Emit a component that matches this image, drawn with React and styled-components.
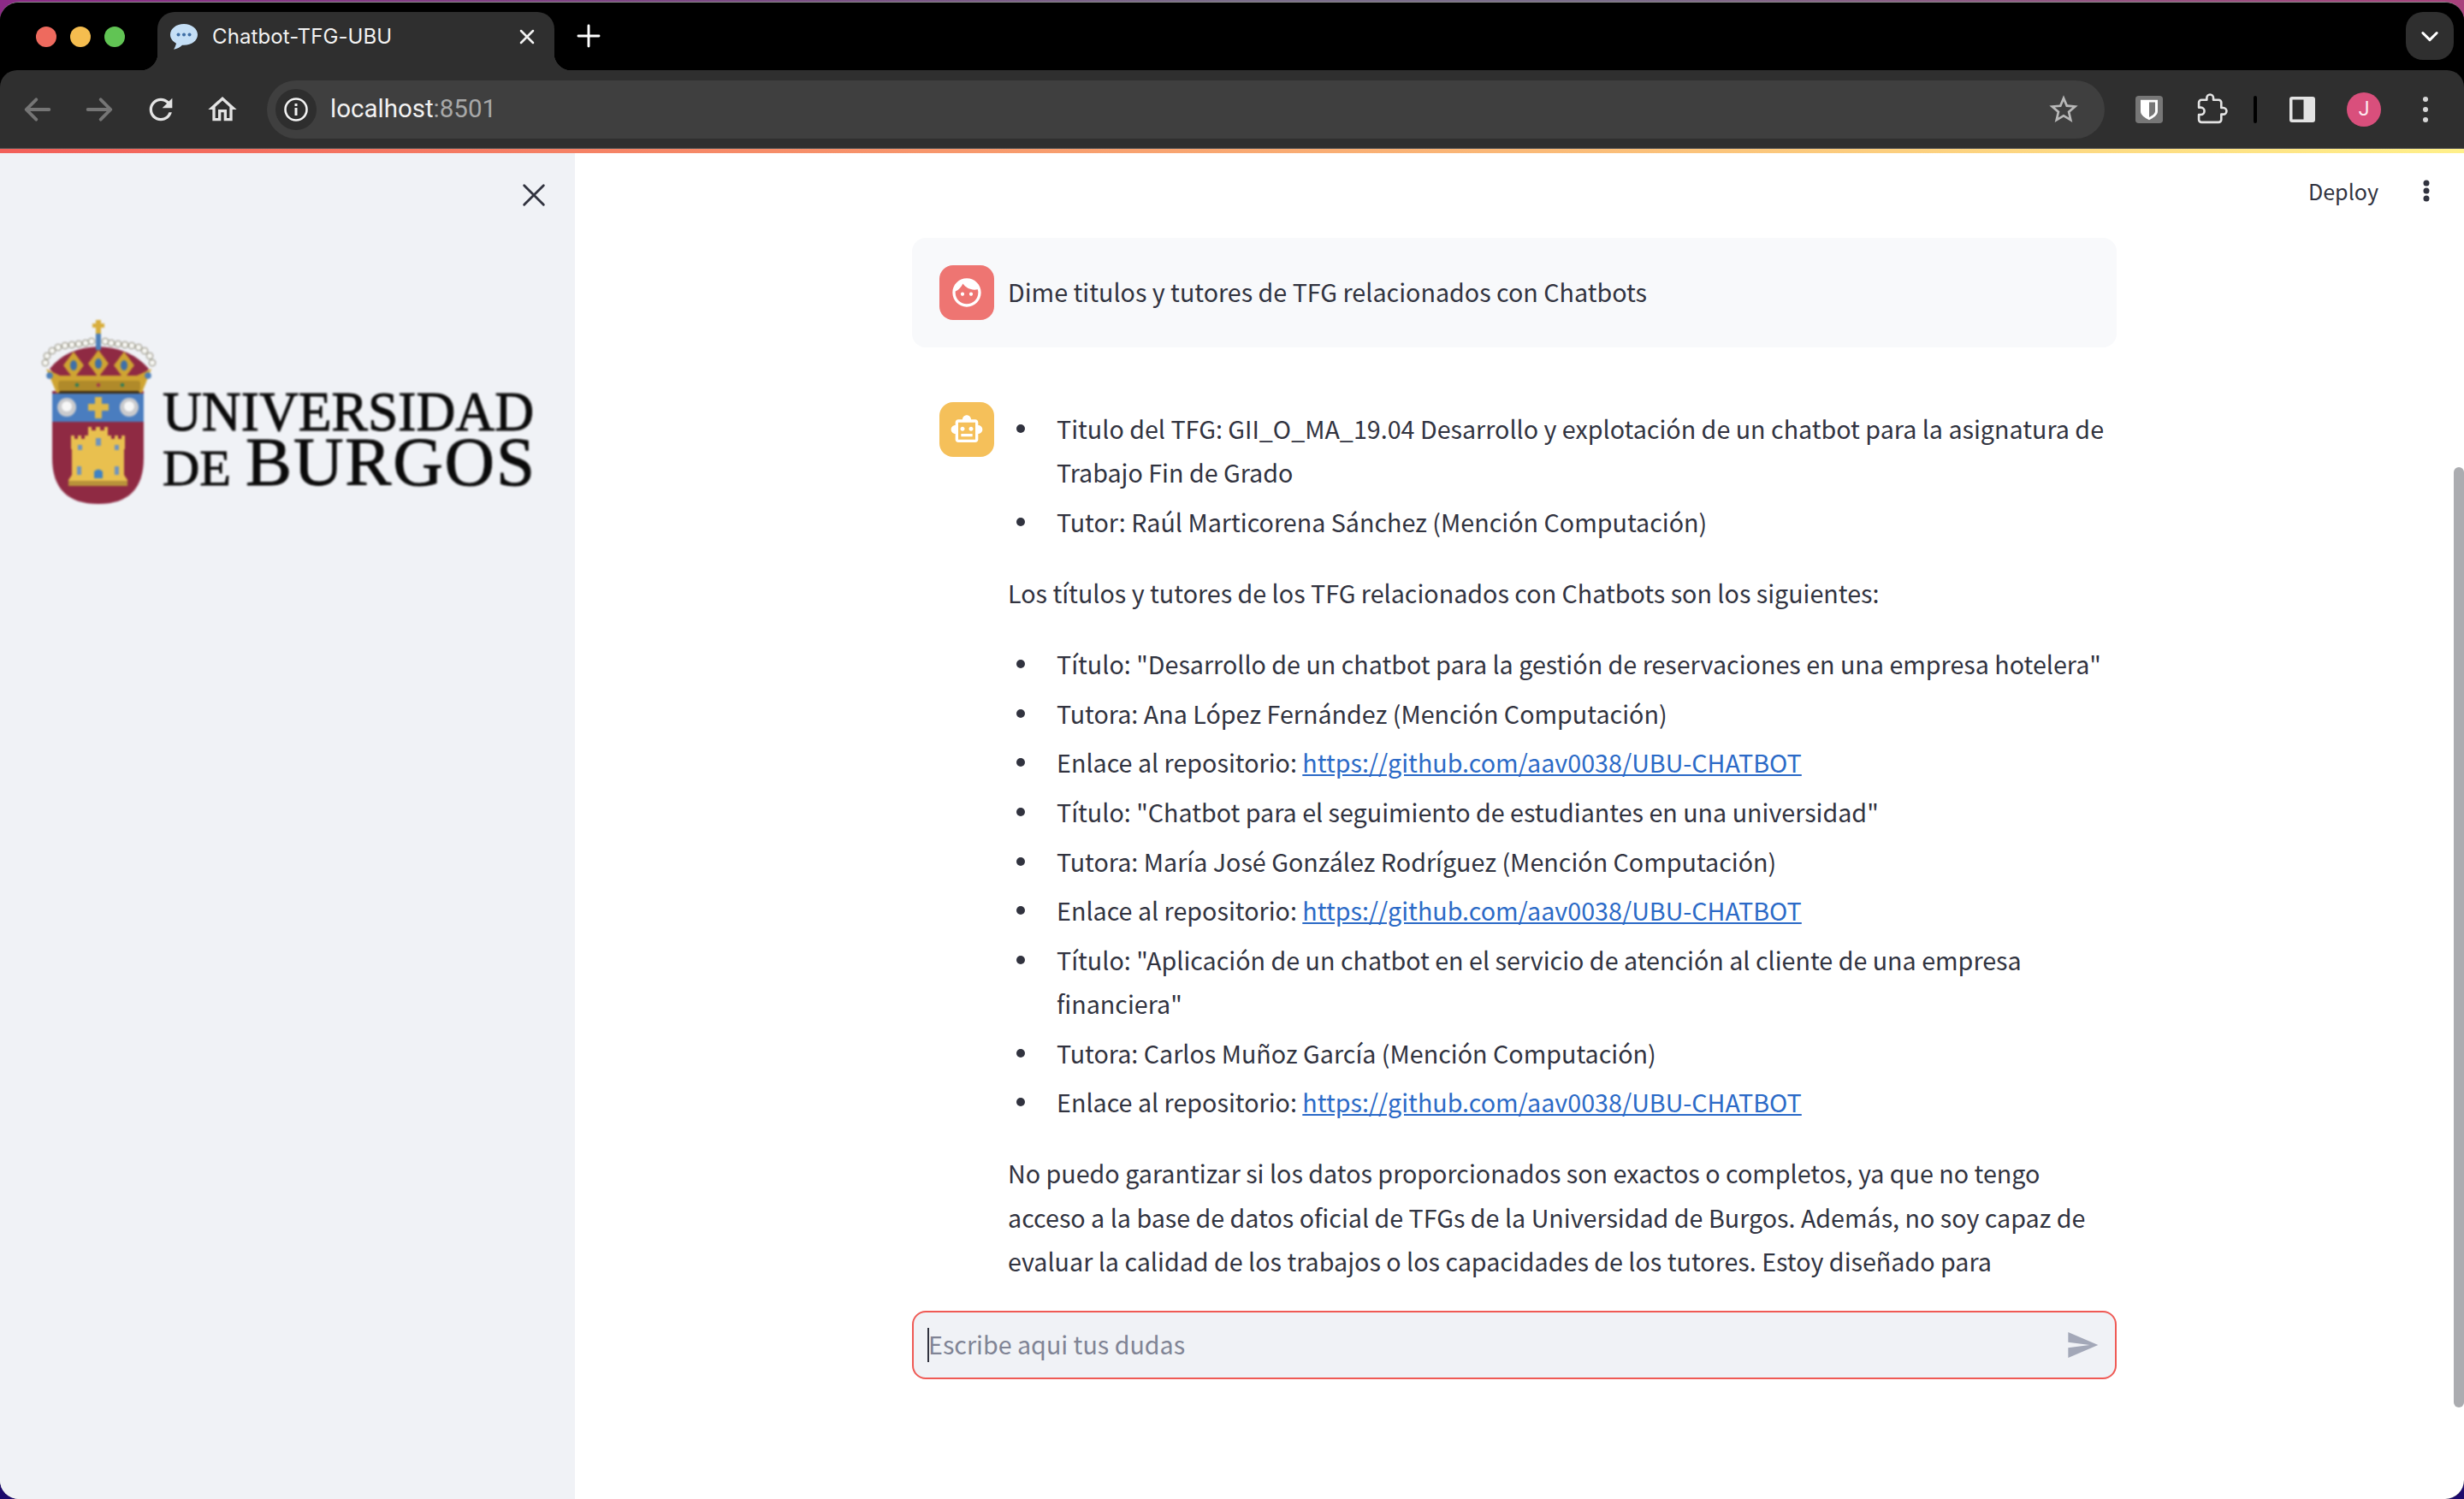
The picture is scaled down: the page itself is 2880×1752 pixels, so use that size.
import React from "react";
import styled, { createGlobalStyle } from "styled-components";

const Global = createGlobalStyle`
  html, body { margin: 0; padding: 0; height: 100%; }
  body {
    width: 2880px; height: 1752px; overflow: hidden;
    background:
      linear-gradient(to bottom, transparent 50%, #1d0a6c 50%),
      linear-gradient(90deg, #8c2a86 0%, #7b4a84 30%, #7a6d8a 50%, #7a6d8a 65%, #a8417c 100%);
    font-family: "Noto Sans CJK SC", "Noto Sans", sans-serif;
  }
  * { box-sizing: border-box; }
`;

const Window = styled.div`
  margin-top: 2px; height: 1750px; width: 2880px;
  border-top: 1px solid #8b8b8b; border-radius: 22px; overflow: hidden;
  background: #000; display: flex; flex-direction: column; position: relative;
`;
const TabStrip = styled.div`
  height: 79px; flex: none; display: flex; align-items: flex-end; background: #000; padding-right: 12px;
`;
const Lights = styled.div`
  width: 184px; height: 79px; flex: none; display: flex; align-items: center; gap: 16px; padding: 0 0 0 42px;
`;
const Light = styled.span`
  width: 24px; height: 24px; border-radius: 50%; background: ${p => p.$c};
`;
const Tab = styled.div`
  position: relative; width: 464px; height: 68px; background: #2f2f2f;
  border-radius: 20px 20px 0 0; display: flex; align-items: center; padding: 0 18px 10px 14px;
  color: #f2f2f2;
  &::before, &::after { content: ""; position: absolute; bottom: 0; width: 20px; height: 20px; }
  &::before { left: -20px; background: radial-gradient(circle at 0 0, transparent 20px, #2f2f2f 20.6px); }
  &::after { right: -20px; background: radial-gradient(circle at 100% 0, transparent 20px, #2f2f2f 20.6px); }
`;
const TabTitle = styled.span`
  font: 400 24px/1 Inter, sans-serif; margin-left: 16px; flex: 1; white-space: nowrap; letter-spacing: 0.1px;
`;
const NewTab = styled.div`
  width: 40px; height: 40px; margin: 0 0 20px 20px; display: flex; align-items: center; justify-content: center;
`;
const Spacer = styled.div` flex: 1; `;
const TabMenu = styled.div`
  width: 56px; height: 56px; border-radius: 20px; background: #2f2f2f; margin-bottom: 12px;
  display: flex; align-items: center; justify-content: center;
`;

const Toolbar = styled.div`
  height: 92px; flex: none; background: #2f2f2f; border-radius: 20px 20px 0 0;
  border-bottom: 1px solid #555; display: flex; align-items: center; padding: 0 0 0 24px;
`;
const NavIcon = styled.div`
  width: 40px; height: 40px; display: flex; align-items: center; justify-content: center;
  margin-right: ${p => p.$mr ?? 32}px; margin-left: ${p => p.$ml ?? 0}px; flex: none;
`;
const Omnibox = styled.div`
  width: 2148px; height: 68px; flex: none; border-radius: 34px; background: #3f3f3f;
  display: flex; align-items: center; padding: 0 28px 0 10px;
`;
const InfoBadge = styled.div`
  width: 48px; height: 48px; border-radius: 50%; background: #2e2e2e; flex: none;
  display: flex; align-items: center; justify-content: center;
`;
const Url = styled.span`
  font: 400 29.5px/1 Roboto, sans-serif; color: #f1f1f1; margin-left: 16px; flex: 1;
  span { color: #a8a8a8; }
`;
const ExtGroup = styled.div`
  display: flex; align-items: center; margin-left: 36px;
`;
const Separator = styled.div`
  width: 4px; height: 32px; border-radius: 2px; background: #000; margin: 0 38px 0 29px;
`;
const Avatar = styled.div`
  width: 40px; height: 40px; border-radius: 50%; background: #d94f7c; color: #fde9ef;
  font: 400 23px/40px Roboto, sans-serif; text-align: center; margin: 0 0 0 37px; flex: none;
`;
const Decoration = styled.div`
  height: 5px; flex: none; background: linear-gradient(90deg, #f2605a, #fff08a);
`;

const Body = styled.div`
  flex: 1; min-height: 0; display: flex; background: #fff; position: relative;
`;
const Sidebar = styled.aside`
  width: 672px; flex: none; background: #f0f2f6; padding: 0 0 0 40px; display: flex; flex-direction: column;
`;
const CloseRow = styled.div`
  height: 190px; flex: none; display: flex; justify-content: flex-end; padding: 32px 31px 0 0;
`;
const Logo = styled.svg`
  width: 590px; height: 225px; display: block; overflow: visible; filter: blur(0.8px);
`;
const Main = styled.main`
  flex: 1; min-width: 0; display: flex; flex-direction: column; align-items: center; padding-right: 12px; position: relative;
`;
const HeaderActions = styled.div`
  position: absolute; right: 39px; top: 24px; display: flex; align-items: center; gap: 51px;
  color: #31333f; font-size: 25.1px; line-height: 40px;
`;
const Dots = styled.svg` display: block; margin-left: ${p => p.$ml ?? 0}px; `;
const Scroller = styled.div`
  flex: 1; min-height: 0; width: 1408px; overflow: hidden; padding-top: 99px;
`;
const Message = styled.div`
  display: flex; gap: 16px; padding: 32px 8px 32px 32px; border-radius: 16px;
  background: ${p => (p.$user ? "#f8f9fb" : "transparent")};
  margin-bottom: 32px;
  color: #31333f; font-size: 28.68px; line-height: 51.2px;
`;
const Chip = styled.div`
  width: 64px; height: 64px; flex: none; border-radius: 16px; background: ${p => p.$c};
  display: flex; align-items: center; justify-content: center;
`;
const Content = styled.div`
  flex: 1; min-width: 0; padding-top: 5px;
`;
const List = styled.ul`
  list-style: none; margin: 0 0 32px; padding: 0 0 0 57px;
`;
const Item = styled.li`
  position: relative; margin: 0 0 6.4px;
  &:last-child { margin-bottom: 0; }
  &::before {
    content: ""; position: absolute; left: -47px; top: 21px; width: 10px; height: 10px;
    border-radius: 50%; background: #31333f;
  }
`;
const Para = styled.p` margin: 0 0 32px; `;
const RepoLink = styled.a` color: #2b6ac7; text-decoration: underline; `;
const Dock = styled.div`
  flex: none; width: 1408px; padding: 32px 0 140px;
`;
const InputBox = styled.div`
  height: 80px; border: 2px solid #ef5a55; border-radius: 16px; background: #f0f2f6;
  display: flex; align-items: center; padding: 0 18px 0 16px;
`;
const Placeholder = styled.div`
  flex: 1; height: 40px; font-size: 28.68px; line-height: 38px; color: #808495;
  border-left: 2px solid #31333f; white-space: nowrap; text-indent: -1px;
`;
const Thumb = styled.div`
  position: absolute; right: 0; top: 367px; width: 12px; height: 1099px; border-radius: 6px; background: #abacb0;
`;

const Stroke = ({ w = 40, children, c = "#fff", sw = 2, vb = "0 0 24 24" }) => (
  <svg width={w} height={w} viewBox={vb} fill="none" stroke={c} strokeWidth={sw} strokeLinecap="round" strokeLinejoin="round">{children}</svg>
);
const Fill = ({ w = 40, c = "#fff", d }) => (
  <svg width={w} height={w} viewBox="0 0 24 24" fill={c}><path d={d} /></svg>
);

const Pearls = () => {
  const pts = [[13,55],[15,47],[21,41],[28,37],[36,35],[44,34],[52,33],[60,32],[67,30],[83,30],[90,32],[98,33],[106,34],[114,35],[122,37],[129,41],[135,47],[138,55]];
  return pts.map(([x, y], i) => <circle key={i} cx={x} cy={y} r="3.8" fill="#f7f7f3" stroke="#7e7b68" strokeWidth="0.9" />);
};
const Fleuron = ({ x, y }) => (
  <>
    <path d={`M${x} ${y - 18}L${x + 12} ${y - 2}L${x} ${y + 14}L${x - 12} ${y - 2}Z`} fill="#cfa432" />
    <ellipse cx={x} cy={y - 2} rx="4" ry="6" fill="#3f70a8" />
  </>
);

const LogoArt = () => (
  <Logo viewBox="0 0 590 225">
    <path d="M21 88H128V166Q128 220 75 220Q21 220 21 166Z" fill="#8f2a43" />
    <rect x="21" y="91" width="107" height="33" fill="#4a7dbf" />
    <circle cx="38" cy="107" r="11" fill="#c9cacd" />
    <circle cx="38" cy="106" r="6" fill="#f7f7f7" />
    <circle cx="111" cy="107" r="11" fill="#c9cacd" />
    <circle cx="111" cy="106" r="6" fill="#f7f7f7" />
    <path d="M71 95h8v8h8v8h-8v9h-8v-9h-8v-8h8z" fill="#dfb94a" />
    <path d="M40 199V192L44 186V156H43V140H47V144H51V140H55V144H59V140H63V156V130H67V134H72V130H77V134H82V130H86V156V140H90V144H94V140H98V144H102V140H106V156H105V186L109 192V199Z" fill="#e9c04f" />
    <rect x="40" y="193" width="69" height="6" fill="#b8923a" />
    <rect x="72" y="143" width="6" height="9" fill="#6f94bf" />
    <rect x="51" y="151" width="5" height="6" fill="#6f94bf" />
    <rect x="94" y="151" width="5" height="6" fill="#6f94bf" />
    <rect x="50" y="176" width="5" height="10" fill="#6f94bf" />
    <rect x="94" y="176" width="5" height="10" fill="#6f94bf" />
    <path d="M70 190v-8q5-5 10 0v8z" fill="#3f83c4" />
    <path d="M18 62Q38 37 75 36Q112 37 134 62L124 74H28Z" fill="#8f2a43" />
    <Fleuron x={46} y={60} />
    <Fleuron x={75} y={58} />
    <Fleuron x={105} y={60} />
    <path d="M14 62L30 70L60 70L90 70L120 70L137 62L126 90H26Z" fill="#cfa432" />
    <rect x="28" y="76" width="96" height="12" rx="3" fill="#b08a2a" />
    <path d="M30 88H122L124 91H28Z" fill="#3b2d17" />
    <circle cx="18" cy="70" r="3.8" fill="#4d7fb8" />
    <circle cx="133" cy="70" r="3.8" fill="#4d7fb8" />
    <circle cx="50" cy="81" r="2.2" fill="#2f7d58" />
    <circle cx="75" cy="81" r="2.2" fill="#a33a4a" />
    <circle cx="103" cy="81" r="2.2" fill="#2f7d58" />
    <Pearls />
    <path d="M75 40V20" stroke="#4d7fb8" strokeWidth="6" />
    <path d="M72 5h6v4h4v5h-4v7h-6v-7h-4v-5h4z" fill="#d8ae3c" />
    <g fontFamily="'Liberation Serif', serif" fill="#0a0a0a" stroke="#0a0a0a" strokeWidth="1">
      <text x="150" y="134" fontSize="66" textLength="434" lengthAdjust="spacingAndGlyphs">UNIVERSIDAD</text>
      <text x="150" y="198" fontSize="60" textLength="80" lengthAdjust="spacingAndGlyphs">DE</text>
      <text x="247" y="198" fontSize="81" textLength="338" lengthAdjust="spacing">BURGOS</text>
    </g>
  </Logo>
);

const github = "https://github.com/aav0038/UBU-CHATBOT";
const Repo = () => (
  <Item>Enlace al repositorio: <RepoLink href={github}>{github}</RepoLink></Item>
);

export default function App() {
  return (
    <>
      <Global />
      <Window>
        <TabStrip>
          <Lights>
            <Light $c="#ee6a5e" />
            <Light $c="#f5bd4f" />
            <Light $c="#61c454" />
          </Lights>
          <Tab>
            <svg width="34" height="34" viewBox="0 0 34 34">
              <path d="M17 2C8 2 1 7.5 1 14.5c0 4.5 3 8 7 10.2-.5 2.5-1.800 5-3 7 4-.5 7.500-2.500 10-5 .7 0 1.400.1 2 .1 9 0 16-5.500 16-12.300S26 2 17 2z" fill="#c5dff6" />
              <circle cx="10.500" cy="14.500" r="2" fill="#3f6ea5" />
              <circle cx="17" cy="14.500" r="2" fill="#3f6ea5" />
              <circle cx="23.500" cy="14.500" r="2" fill="#3f6ea5" />
            </svg>
            <TabTitle>Chatbot-TFG-UBU</TabTitle>
            <Stroke w={28} sw={2.2} c="#f2f2f2"><path d="M6 6l12 12M18 6L6 18" /></Stroke>
          </Tab>
          <NewTab><Stroke w={32} sw={2.2}><path d="M12 3v18M3 12h18" /></Stroke></NewTab>
          <Spacer />
          <TabMenu><Stroke w={28} sw={2.6}><path d="M5 9l7 7 7-7" /></Stroke></TabMenu>
        </TabStrip>
        <Toolbar>
          <NavIcon><Stroke c="#757575" sw={2.3}><path d="M20 12H5M11 5l-7 7 7 7" /></Stroke></NavIcon>
          <NavIcon><Stroke c="#757575" sw={2.3}><path d="M4 12h15M13 5l7 7-7 7" /></Stroke></NavIcon>
          <NavIcon><Fill c="#e3e3e3" d="M17.65 6.35A7.958 7.958 0 0 0 12 4c-4.420 0-7.990 3.580-7.990 8s3.570 8 7.990 8c3.730 0 6.840-2.550 7.730-6h-2.080A5.990 5.990 0 0 1 12 18c-3.310 0-6-2.690-6-6s2.690-6 6-6c1.660 0 3.140.69 4.220 1.780L13 11h7V4l-2.350 2.350z" /></NavIcon>
          <NavIcon $mr={32}><Fill c="#e3e3e3" d="M12 5.690l5 4.500V18h-2v-6H9v6H7v-7.810l5-4.500M12 3L2 12h3v8h6v-6h2v6h6v-8h3L12 3z" /></NavIcon>
          <Omnibox>
            <InfoBadge>
              <svg width="32" height="32" viewBox="0 0 32 32" fill="none">
                <circle cx="16" cy="16" r="12.500" stroke="#f2f2f2" strokeWidth="2.600" />
                <rect x="14.500" y="14" width="3" height="9" fill="#f2f2f2" />
                <rect x="14.500" y="9" width="3" height="3" fill="#f2f2f2" />
              </svg>
            </InfoBadge>
            <Url>localhost<span>:8501</span></Url>
            <Fill c="#b8b8b8" d="M22 9.240l-7.190-.620L12 2 9.190 8.630 2 9.240l5.460 4.730L5.820 21 12 17.270 18.180 21l-1.630-7.030L22 9.240zM12 15.400l-3.760 2.270 1-4.280-3.320-2.880 4.380-.380L12 6.100l1.710 4.040 4.380.380-3.320 2.880 1 4.280L12 15.400z" />
          </Omnibox>
          <ExtGroup>
            <svg width="32" height="32" viewBox="0 0 32 34" preserveAspectRatio="none">
              <rect width="32" height="34" rx="4" fill="#777" />
              <path d="M6 5h20v14c0 5-5 8-10 11-5-3-10-6-10-11z" fill="#fff" />
              <path d="M16 8h7v11c0 3-3.500 5.500-7 7.500z" fill="#777" />
            </svg>
            <NavIcon $mr={0} $ml={37}>
              <Stroke w={37} c="#e3e3e3" sw={1.700}><path d="M20.500 11H19V7c0-1.100-.9-2-2-2h-4V3.500C13 2.120 11.880 1 10.500 1S8 2.120 8 3.500V5H4c-1.100 0-1.990.9-1.990 2v3.800H3.500c1.490 0 2.700 1.210 2.700 2.700s-1.210 2.700-2.700 2.700H2V20c0 1.100.9 2 2 2h13c1.100 0 2-.9 2-2v-4h1.500c1.380 0 2.500-1.120 2.500-2.500S21.880 11 20.500 11z" /></Stroke>
            </NavIcon>
            <Separator />
            <svg width="30" height="30" viewBox="0 0 30 30">
              <rect width="30" height="30" rx="3" fill="#e3e3e3" />
              <rect x="3.500" y="3.500" width="13" height="23" fill="#2f2f2f" />
            </svg>
            <Avatar>J</Avatar>
            <Dots $ml={47} width="10" height="34" viewBox="0 0 10 34">
              <circle cx="5" cy="5" r="3" fill="#d6d6d6" />
              <circle cx="5" cy="17" r="3" fill="#d6d6d6" />
              <circle cx="5" cy="29" r="3" fill="#d6d6d6" />
            </Dots>
          </ExtGroup>
        </Toolbar>
        <Decoration />
        <Body>
          <Sidebar>
            <CloseRow>
              <Stroke w={34} c="#31333f" sw={2}><path d="M4 4l16 16M20 4L4 20" /></Stroke>
            </CloseRow>
            <LogoArt />
          </Sidebar>
          <Main>
            <HeaderActions>
              <span>Deploy</span>
              <Dots width="10" height="30" viewBox="0 0 10 30">
                <circle cx="5" cy="6" r="3.500" fill="#31333f" />
                <circle cx="5" cy="15" r="3.500" fill="#31333f" />
                <circle cx="5" cy="24" r="3.500" fill="#31333f" />
              </Dots>
            </HeaderActions>
            <Scroller>
              <Message $user>
                <Chip $c="#ee7572">
                  <Fill d="M9 11.750c-.69 0-1.250.56-1.250 1.250s.56 1.250 1.250 1.250 1.250-.56 1.250-1.250-.56-1.250-1.250-1.250zm6 0c-.69 0-1.250.56-1.250 1.250s.56 1.250 1.250 1.250 1.250-.56 1.250-1.250-.56-1.250-1.250-1.250zM12 2C6.480 2 2 6.480 2 12s4.480 10 10 10 10-4.480 10-10S17.520 2 12 2zm0 18c-4.410 0-8-3.590-8-8 0-.29.02-.58.05-.86 2.360-1.050 4.230-2.980 5.210-5.370C11.070 8.330 14.050 10 17.420 10c.78 0 1.530-.09 2.250-.26.21.71.33 1.470.33 2.260 0 4.410-3.590 8-8 8z" />
                </Chip>
                <Content>Dime titulos y tutores de TFG relacionados con Chatbots</Content>
              </Message>
              <Message>
                <Chip $c="#f5c05a">
                  <Fill d="M20 9V7c0-1.100-.9-2-2-2h-3c0-1.660-1.340-3-3-3S9 3.340 9 5H6c-1.100 0-2 .9-2 2v2c-1.660 0-3 1.340-3 3s1.340 3 3 3v4c0 1.100.9 2 2 2h12c1.100 0 2-.9 2-2v-4c1.660 0 3-1.340 3-3s-1.340-3-3-3zm-2 10H6V7h12v12zm-9-6c-.83 0-1.500-.67-1.500-1.500S8.170 10 9 10s1.500.67 1.500 1.500S9.830 13 9 13zm7.500-1.500c0 .83-.67 1.500-1.500 1.500s-1.500-.67-1.500-1.500.67-1.500 1.500-1.500 1.500.67 1.500 1.500zM8 15h8v2H8v-2z" />
                </Chip>
                <Content>
                  <List>
                    <Item>Titulo del TFG: GII_O_MA_19.04 Desarrollo y explotación de un chatbot para la asignatura de Trabajo Fin de Grado</Item>
                    <Item>Tutor: Raúl Marticorena Sánchez (Mención Computación)</Item>
                  </List>
                  <Para>Los títulos y tutores de los TFG relacionados con Chatbots son los siguientes:</Para>
                  <List>
                    <Item>Título: "Desarrollo de un chatbot para la gestión de reservaciones en una empresa hotelera"</Item>
                    <Item>Tutora: Ana López Fernández (Mención Computación)</Item>
                    <Repo />
                    <Item>Título: "Chatbot para el seguimiento de estudiantes en una universidad"</Item>
                    <Item>Tutora: María José González Rodríguez (Mención Computación)</Item>
                    <Repo />
                    <Item>Título: "Aplicación de un chatbot en el servicio de atención al cliente de una empresa financiera"</Item>
                    <Item>Tutora: Carlos Muñoz García (Mención Computación)</Item>
                    <Repo />
                  </List>
                  <Para>No puedo garantizar si los datos proporcionados son exactos o completos, ya que no tengo acceso a la base de datos oficial de TFGs de la Universidad de Burgos. Además, no soy capaz de evaluar la calidad de los trabajos o los capacidades de los tutores. Estoy diseñado para</Para>
                </Content>
              </Message>
            </Scroller>
            <Dock>
              <InputBox>
                <Placeholder>Escribe aqui tus dudas</Placeholder>
                <Fill c="#a3a8b8" d="M2.010 21L23 12 2.010 3 2 10l15 2-15 2z" />
              </InputBox>
            </Dock>
            <Thumb />
          </Main>
        </Body>
      </Window>
    </>
  );
}
